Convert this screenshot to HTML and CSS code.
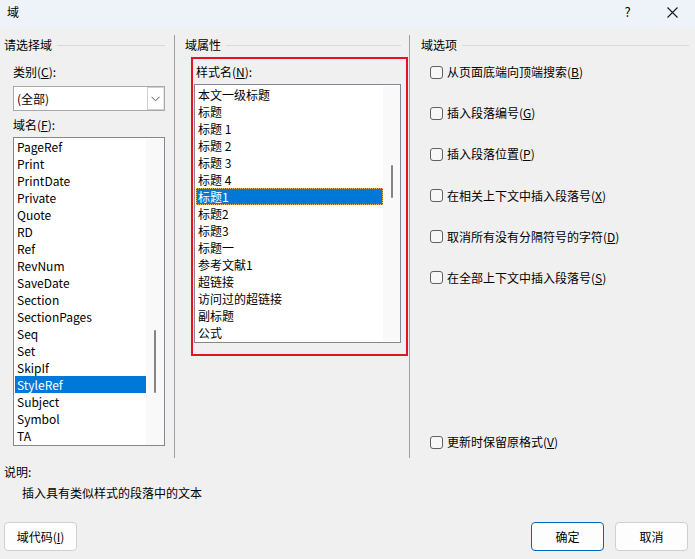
FILE: index.html
```html
<!DOCTYPE html>
<html lang="zh-CN">
<head>
<meta charset="utf-8">
<title>域</title>
<link rel="stylesheet" href="styles.css">
</head>
<body>
<div class="dialog">
  <div class="titlebar">
    <span class="title">域</span>
    <span class="tb-btn help">?</span>
    <span class="tb-btn close"><svg width="11" height="11" viewBox="0 0 11 11"><path d="M0.5 0.5 L10.5 10.5 M10.5 0.5 L0.5 10.5" stroke="#1a1a1a" stroke-width="1.1" fill="none"/></svg></span>
  </div>

  <div class="main">
    <section class="col col-left">
      <div class="group-head"><span>请选择域</span><i class="rule"></i></div>
      <div class="label lbl-cat">类别(<u>C</u>):</div>
      <div class="combo">
        <span class="combo-text">(全部)</span>
        <span class="combo-drop"><svg width="9" height="6" viewBox="0 0 9 6"><path d="M0.5 0.8 L4.5 4.8 L8.5 0.8" stroke="#555" stroke-width="1" fill="none"/></svg></span>
      </div>
      <div class="label lbl-name">域名(<u>F</u>):</div>
      <div class="listbox list-left">
        <div class="items">
          <div class="item">PageRef</div>
          <div class="item">Print</div>
          <div class="item">PrintDate</div>
          <div class="item">Private</div>
          <div class="item">Quote</div>
          <div class="item">RD</div>
          <div class="item">Ref</div>
          <div class="item">RevNum</div>
          <div class="item">SaveDate</div>
          <div class="item">Section</div>
          <div class="item">SectionPages</div>
          <div class="item">Seq</div>
          <div class="item">Set</div>
          <div class="item">SkipIf</div>
          <div class="item selected">StyleRef</div>
          <div class="item">Subject</div>
          <div class="item">Symbol</div>
          <div class="item">TA</div>
        </div>
        <div class="track"><div class="thumb thumb-left"></div></div>
      </div>
    </section>

    <div class="vsep"></div>

    <section class="col col-mid">
      <div class="group-head"><span>域属性</span><i class="rule"></i></div>
      <div class="highlight">
        <div class="label lbl-style">样式名(<u>N</u>):</div>
        <div class="listbox list-mid">
          <div class="items">
            <div class="item">本文一级标题</div>
            <div class="item">标题</div>
            <div class="item">标题 1</div>
            <div class="item">标题 2</div>
            <div class="item">标题 3</div>
            <div class="item">标题 4</div>
            <div class="item selected focus">标题1</div>
            <div class="item">标题2</div>
            <div class="item">标题3</div>
            <div class="item">标题一</div>
            <div class="item">参考文献1</div>
            <div class="item">超链接</div>
            <div class="item">访问过的超链接</div>
            <div class="item">副标题</div>
            <div class="item">公式</div>
          </div>
          <div class="track"><div class="thumb thumb-mid"></div></div>
        </div>
      </div>
    </section>

    <div class="vsep"></div>

    <section class="col col-right">
      <div class="group-head"><span>域选项</span><i class="rule"></i></div>
      <div class="options">
        <label class="opt"><span class="cb"></span>从页面底端向顶端搜索(<u>B</u>)</label>
        <label class="opt"><span class="cb"></span>插入段落编号(<u>G</u>)</label>
        <label class="opt"><span class="cb"></span>插入段落位置(<u>P</u>)</label>
        <label class="opt"><span class="cb"></span>在相关上下文中插入段落号(<u>X</u>)</label>
        <label class="opt"><span class="cb"></span>取消所有没有分隔符号的字符(<u>D</u>)</label>
        <label class="opt"><span class="cb"></span>在全部上下文中插入段落号(<u>S</u>)</label>
      </div>
      <label class="opt opt-last"><span class="cb"></span>更新时保留原格式(<u>V</u>)</label>
    </section>
  </div>

  <div class="desc">
    <div class="desc-title">说明:</div>
    <div class="desc-text">插入具有类似样式的段落中的文本</div>
  </div>

  <div class="buttons">
    <button class="btn">域代码(<u>I</u>)</button>
    <span class="spacer"></span>
    <button class="btn primary">确定</button>
    <button class="btn">取消</button>
  </div>
</div>
</body>
</html>
```

FILE: styles.css
```css
* { box-sizing: border-box; }

html, body {
  margin: 0;
  padding: 0;
}

body {
  width: 695px;
  height: 559px;
  background: #f0f0f0;
  font-family: "Noto Sans CJK SC", "Noto Sans", sans-serif;
  font-size: 12px;
  line-height: 16px;
  color: #000;
  overflow: hidden;
}

u { text-decoration: underline; text-underline-offset: 1px; }

.dialog {
  display: flex;
  flex-direction: column;
  width: 695px;
  height: 559px;
}

/* title bar */
.titlebar {
  height: 28px;
  background: #eef2f9;
  display: flex;
  align-items: flex-start;
  flex: none;
}
.title {
  padding: 4px 0 0 7px;
  flex: 1;
}
.tb-btn {
  width: 45px;
  height: 28px;
  display: flex;
  align-items: flex-start;
  justify-content: center;
  padding-top: 4px;
}
.help { font-size: 13px; margin-left: 2px; }
.close { padding-top: 7px; }

/* main area */
.main {
  display: flex;
  height: 430px;
  flex: none;
}
.col {
  display: flex;
  flex-direction: column;
  padding-top: 9px;
}
.col-left { width: 174px; padding-left: 4px; padding-right: 9px; }
.col-mid { width: 234px; padding-left: 10px; padding-right: 8px; }
.col-right { flex: 1; padding-left: 11px; padding-right: 6px; padding-bottom: 8px; }

.vsep {
  width: 1px;
  margin-top: 7px;
  background: #a0a0a0;
  flex: none;
}

.group-head {
  display: flex;
  align-items: center;
  height: 16px;
}
.group-head .rule {
  flex: 1;
  height: 1px;
  margin-left: 5px;
  background: #d9d9d9;
}

.label { height: 16px; }
.lbl-cat { margin: 11px 0 0 9px; }
.lbl-name { margin: 6px 0 0 9px; }

.combo {
  margin: 6px 0 0 9px;
  height: 25px;
  background: #fff;
  border: 1px solid #a9a9a9;
  display: flex;
  align-items: stretch;
}
.combo-text {
  flex: 1;
  padding-left: 3px;
  line-height: 23px;
}
.combo-drop {
  width: 17px;
  border: 1px solid #cfcfcf;
  border-right-color: #e4e4e4;
  margin: 0;
  display: flex;
  align-items: center;
  justify-content: center;
  background: #fff;
}

/* list boxes */
.listbox {
  display: flex;
  background: #fff;
  border: 1px solid #828790;
}
.items { display: flex; flex-direction: column; }
.item {
  height: 17px;
  line-height: 17px;
  padding-left: 2px;
  white-space: nowrap;
}
.item.selected {
  background: #0078d7;
  color: #fff;
}
.item.focus { outline: 1px dotted #f2b866; outline-offset: -1px; }

.track {
  flex: 1;
  background: #f9f9f9;
}
.thumb {
  width: 2px;
  background: #858585;
  border-radius: 1px;
}

.list-left {
  margin: 4px 0 0 9px;
  height: 309px;
  padding: 0 0 0 1px;
}
.list-left .items { width: 131px; }
.thumb-left { margin: 192px 0 0 8px; height: 63px; }

.highlight {
  margin: 4px 0 0 6px;
  width: 217px;
  height: 299px;
  border: 2px solid #e81123;
  padding: 5px 5px 0 1px;
}
.lbl-style { margin-left: 2px; }
.list-mid {
  margin-top: 4px;
  height: 259px;
  padding: 1px 0 1px 1px;
}
.list-mid .items { width: 187px; }
.thumb-mid { margin: 79px 0 0 8px; height: 33px; }

/* options */
.options {
  display: flex;
  flex-direction: column;
  gap: 25.2px;
  margin-top: 11px;
}
.opt {
  display: flex;
  align-items: center;
  height: 16px;
  padding-left: 9px;
  white-space: nowrap;
}
.cb {
  width: 13px;
  height: 13px;
  border: 1px solid #616161;
  border-radius: 3px;
  background: #f7f7f7;
  margin-right: 4px;
  flex: none;
}
.opt-last { margin-top: auto; }

/* description */
.desc { padding: 6px 0 0 4px; }
.desc-title { height: 16px; }
.desc-text { margin-top: 5px; padding-left: 18px; height: 16px; }

/* buttons */
.buttons {
  display: flex;
  margin-top: 21px;
  padding: 0 7px 0 4px;
  gap: 11px;
}
.spacer { flex: 1; }
.btn {
  width: 73px;
  height: 29px;
  font: inherit;
  color: #000;
  background: #fdfdfd;
  border: 1px solid #d0d0d0;
  border-radius: 4px;
  padding: 0;
}
.btn.primary { border-color: #0067c0; }
```
